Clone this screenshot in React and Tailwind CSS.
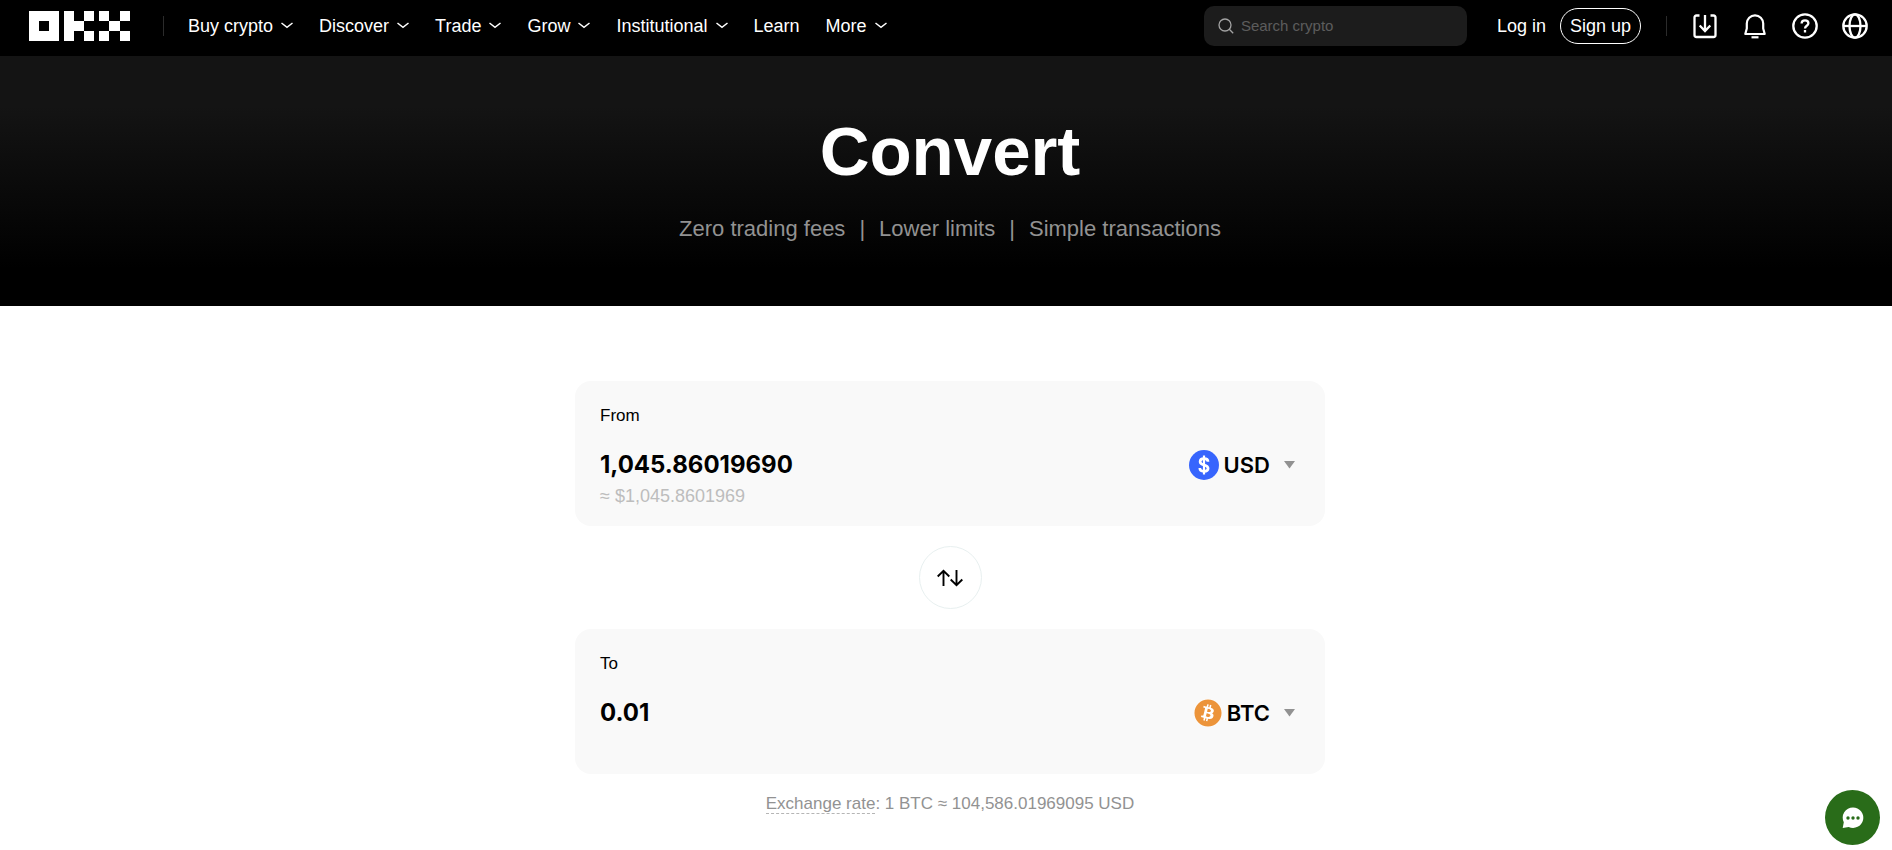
import { useState } from 'react';
import { FaBitcoin } from 'react-icons/fa';

const NAV_ITEMS = [
  { label: 'Buy crypto', menu: true },
  { label: 'Discover', menu: true },
  { label: 'Trade', menu: true },
  { label: 'Grow', menu: true },
  { label: 'Institutional', menu: true },
  { label: 'Learn', menu: false },
  { label: 'More', menu: true },
];

function Logo() {
  return (
    <svg width="101" height="31" viewBox="0 0 101 31" fill="#fff" shapeRendering="crispEdges">
      <path fillRule="evenodd" d="M0 0h30v30H0zM10 10v10h10V10z" />
      <path d="M35 0h10v10h10v10H45v10H35z" />
      <path d="M55 0h10v10H55zM55 20h10v10H55z" />
      <path d="M70 0h10v10H70zM91 0h10v10H91zM80 10h11v10H80zM70 20h10v10H70zM91 20h10v10H91z" />
    </svg>
  );
}

function ChevronIcon() {
  return (
    <svg width="12" height="8" viewBox="0 0 12 8" fill="none" stroke="#fff" strokeWidth="1.500">
      <path d="M.5 1 6 5.300 11.500 1" />
    </svg>
  );
}

function SearchIcon() {
  return (
    <svg width="16" height="16" viewBox="0 0 16 16" fill="none" stroke="#a3a3a3" strokeWidth="1.300">
      <circle cx="7" cy="7" r="6" />
      <path d="m11.300 11.300 3.900 3.900" />
    </svg>
  );
}

function DownloadIcon() {
  return (
    <svg width="26" height="26" viewBox="0 0 26 26" fill="none" stroke="#fff" strokeWidth="2.300">
      <path d="M7.500 2.500H4.500Q2.500 2.500 2.500 4.500V22q0 2 2 2h17q2 0 2-2V4.500q0-2-2-2h-3" />
      <path d="M13 2v15.500M7.700 12.500l5.300 5.500 5.300-5.500" />
    </svg>
  );
}

function BellIcon() {
  return (
    <svg width="26" height="26" viewBox="0 0 26 26" fill="none" stroke="#fff" strokeWidth="2.200">
      <path d="M4.800 10.500a8.200 8.200 0 0 1 16.400 0v5l1.500 5.500H3.300l1.500-5.500z" strokeLinejoin="round" />
      <path d="M9.500 24.300h7" />
    </svg>
  );
}

function HelpIcon() {
  return (
    <svg width="26" height="26" viewBox="0 0 26 26" fill="none" stroke="#fff" strokeWidth="2.300">
      <circle cx="13" cy="13" r="11.700" />
      <path d="M9.600 10.500C9.600 8.300 11 7.300 13 7.300s3.400 1.200 3.400 3c0 2.500-3.400 2.500-3.400 5.200" />
      <path d="M13 17v2.500" />
    </svg>
  );
}

function GlobeIcon() {
  return (
    <svg width="26" height="26" viewBox="0 0 26 26" fill="none" stroke="#fff" strokeWidth="2.300">
      <circle cx="13" cy="13" r="11.700" />
      <ellipse cx="13" cy="13" rx="5.500" ry="11.700" />
      <path d="M1 13h24" />
    </svg>
  );
}

function UsdIcon() {
  return (
    <svg width="30" height="30" viewBox="0 0 30 30" fill="none">
      <circle cx="15" cy="15" r="15" fill="#3765fd" />
      <path
        d="M19 11.700C19 9.700 17.300 8.700 15 8.700s-3.900 1.100-3.900 3c0 4.300 8 2.200 8 6.600 0 2-1.700 3.100-4.100 3.100s-4.200-1.100-4.200-3.300"
        stroke="#fff"
        strokeWidth="2.700"
      />
      <path d="M15 5.500v19" stroke="#fff" strokeWidth="2.200" />
    </svg>
  );
}

function BtcIcon() {
  return (
    <span className="flex rounded-full bg-white">
      <FaBitcoin className="size-7 text-[#ec943a]" />
    </span>
  );
}

function SwapIcon() {
  return (
    <svg width="26" height="18" viewBox="0 0 26 18" fill="none" stroke="#000" strokeWidth="1.900">
      <path d="M6.500 17V2M.7 7.500l5.800-5.700 5.800 5.700" />
      <path d="M19.500 1v15M13.700 10.500l5.800 5.700 5.800-5.700" />
    </svg>
  );
}

function ChatIcon() {
  return (
    <svg width="22" height="22" viewBox="0 0 22 22">
      <path d="M11 .5a10.200 10.200 0 1 1-4.300 19.400L.7 21l1.100-5.700A10.200 10.200 0 0 1 11 .5z" fill="#fff" />
      <g fill="#296c19">
        <circle cx="6" cy="11" r="1.700" />
        <circle cx="11" cy="11" r="1.700" />
        <circle cx="16" cy="11" r="1.700" />
      </g>
    </svg>
  );
}

function Header() {
  return (
    <header className="flex h-14 items-center bg-black pb-1 pl-[29px] pr-6 text-lg text-white">
      <a href="/" aria-label="OKX">
        <Logo />
      </a>
      <span className="ml-[33px] mr-6 h-5 w-px bg-[#2b2b2b]" />
      <nav className="flex items-center gap-[26px]">
        {NAV_ITEMS.map((item) =>
          item.menu ? (
            <button key={item.label} type="button" className="flex items-center gap-2 whitespace-nowrap">
              {item.label}
              <ChevronIcon />
            </button>
          ) : (
            <a key={item.label} href="/learn">
              {item.label}
            </a>
          )
        )}
      </nav>

      <div className="ml-auto flex items-center">
        <label className="flex h-10 w-[263px] items-center gap-[7px] rounded-[10px] bg-[#1c1c1c] px-[14px]">
          <SearchIcon />
          <input
            type="search"
            aria-label="Search crypto"
            placeholder="Search crypto"
            className="min-w-0 flex-1 bg-transparent text-[15px] outline-none placeholder:text-[#5c5c5c]"
          />
        </label>
        <a href="/login" className="ml-[30px] whitespace-nowrap">
          Log in
        </a>
        <a
          href="/signup"
          className="ml-[14px] flex h-9 items-center whitespace-nowrap rounded-full border border-white px-[9px]"
        >
          Sign up
        </a>
        <span className="mx-[25px] h-5 w-px bg-[#2b2b2b]" />
        <div className="flex items-center gap-6">
          <button type="button" aria-label="Download">
            <DownloadIcon />
          </button>
          <button type="button" aria-label="Notifications">
            <BellIcon />
          </button>
          <button type="button" aria-label="Help">
            <HelpIcon />
          </button>
          <button type="button" aria-label="Language">
            <GlobeIcon />
          </button>
        </div>
      </div>
    </header>
  );
}

function AmountCard({ id, label, value, onChange, estimate, icon, currency, options }) {
  return (
    <section className="h-[145px] rounded-2xl bg-[#f9f9f9] pl-[25px] pr-[30px] pt-[23px]">
      <label htmlFor={id} className="block text-[17px] leading-6">
        {label}
      </label>
      <div className="mt-[21px] flex h-8 items-center justify-between">
        <input
          id={id}
          value={value}
          onChange={(e) => onChange(e.target.value)}
          className="min-w-0 flex-1 bg-transparent font-[Inter,sans-serif] text-2xl font-bold outline-none"
        />
        <div className="flex items-center gap-[5px]">
          {icon}
          <select
            aria-label={`${label} currency`}
            defaultValue={currency}
            className="field-sizing-content appearance-none bg-transparent font-[Inter,sans-serif] text-[22px] font-semibold outline-none"
          >
            {options.map((option) => (
              <option key={option}>{option}</option>
            ))}
          </select>
          <svg width="11" height="8" viewBox="0 0 11 8" className="ml-[9px]" fill="#929292">
            <path d="M0 0h11L5.500 7.500z" />
          </svg>
        </div>
      </div>
      {estimate && <p className="text-lg leading-[30px] text-[#bdbdbd]">{estimate}</p>}
    </section>
  );
}

export default function App() {
  const [from, setFrom] = useState('1,045.86019690');
  const [to, setTo] = useState('0.01');

  return (
    <div className="min-h-screen bg-white font-['Liberation_Sans',Arial,sans-serif] text-black">
      <Header />

      <div className="bg-linear-to-b/srgb from-[#141414] from-20% to-black to-85% pb-[61px] pl-2 pt-14 text-center">
        <h1 className="text-[69px] font-bold leading-[80px] text-white">Convert</h1>
        <p className="mt-[21px] text-[22px] leading-8 text-[#929292]">
          Zero trading fees<span className="mx-[14px]">|</span>Lower limits
          <span className="mx-[14px]">|</span>Simple transactions
        </p>
      </div>

      <main className="pl-2 pt-[75px]">
        <div className="mx-auto max-w-[750px]">
          <AmountCard
            id="from"
            label="From"
            value={from}
            onChange={setFrom}
            estimate="≈ $1,045.8601969"
            icon={<UsdIcon />}
            currency="USD"
            options={['USD']}
          />
          <div className="flex justify-center py-5">
            <button
              type="button"
              aria-label="Swap currencies"
              className="flex size-[63px] items-center justify-center rounded-full border border-[#e8f0f0]"
            >
              <SwapIcon />
            </button>
          </div>
          <AmountCard
            id="to"
            label="To"
            value={to}
            onChange={setTo}
            icon={<BtcIcon />}
            currency="BTC"
            options={['BTC']}
          />
          <p className="mt-5 text-center text-[17px] leading-5 text-[#929292]">
            <span className="border-b border-dashed border-[#b5b5b5]">Exchange rate</span>: 1 BTC ≈
            104,586.01969095 USD
          </p>
        </div>
      </main>

      <button
        type="button"
        aria-label="Chat"
        className="fixed bottom-[5px] right-3 flex size-[55px] items-center justify-center rounded-full bg-[#296c19]"
      >
        <ChatIcon />
      </button>
    </div>
  );
}
